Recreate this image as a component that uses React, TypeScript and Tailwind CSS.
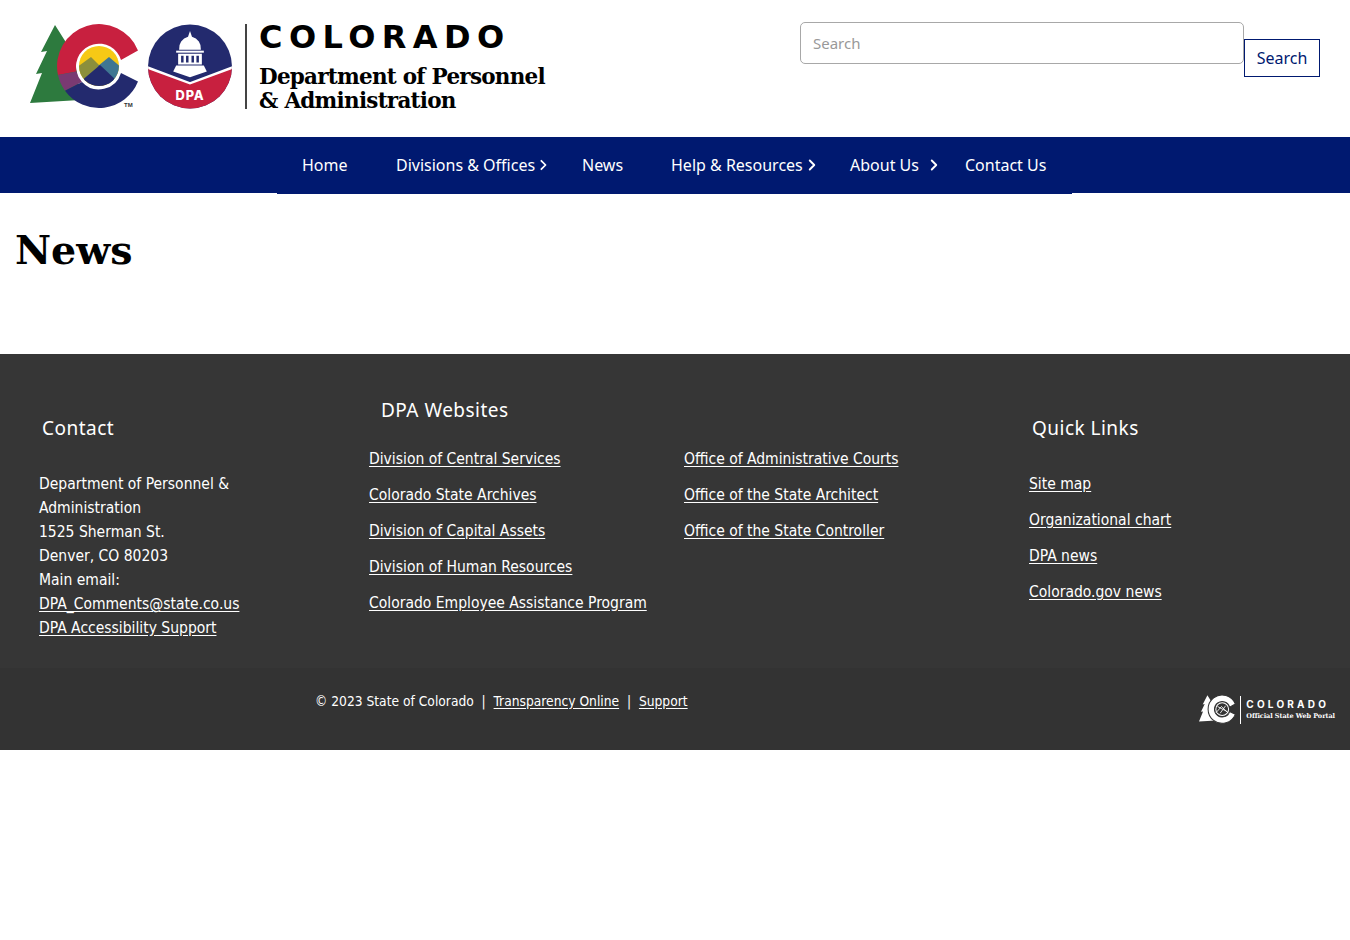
import React from "react";
import { ChevronRight } from "lucide-react";

const navItems = [
  { label: "Home", width: "w-[94px]" },
  { label: "Divisions & Offices", width: "w-[186px]", arrow: "mr-[30px]" },
  { label: "News", width: "w-[89px]" },
  { label: "Help & Resources", width: "w-[179px]", arrow: "mr-[29px]" },
  { label: "About Us", width: "w-[115px]", arrow: "mr-[22px]" },
  { label: "Contact Us", width: "w-[107px]" },
];

const websitesLeft = [
  "Division of Central Services",
  "Colorado State Archives",
  "Division of Capital Assets",
  "Division of Human Resources",
  "Colorado Employee Assistance Program",
];

const websitesRight = [
  "Office of Administrative Courts",
  "Office of the State Architect",
  "Office of the State Controller",
];

const quickLinks = ["Site map", "Organizational chart", "DPA news", "Colorado.gov news"];

const TREE = "M25 1 L37 20 L45 30 L50 76 L0 79 L12 49 L6 50 L17 27 L11 28 Z";

const ColoradoMark = () => (
  <svg viewBox="0 0 110 86" className="h-full w-full">
    <defs>
      <clipPath id="disc">
        <circle cx="69" cy="42" r="20" />
      </clipPath>
    </defs>
    <path d={TREE} fill="#2d7a3e" />
    <circle cx="69" cy="42" r="23" fill="#fff" />
    <path d="M108 26.400 A42 42 0 0 0 28 51 L46.500 47.500 A23 23 0 0 1 91 36 Z" fill="#c8203f" />
    <path d="M28 51 A42 42 0 0 0 35 66.700 L52 58 A23 23 0 0 1 46.500 47.500 Z" fill="#7a3a72" />
    <path d="M35 66.700 A42 42 0 0 0 108 57.600 L91 49 A23 23 0 0 1 52 58 Z" fill="#232a6e" />
    <g clipPath="url(#disc)">
      <rect x="45" y="18" width="48" height="48" fill="#f6c915" />
      <path d="M46 44 L61 33 L72 44 L62 60 L46 60 Z" fill="#8b8f3c" />
      <path d="M68 42 L79 33 L93 45 L90 60 L76 60 Z" fill="#3f7692" />
      <path d="M50 58 L70 41 L88 58 L88 66 L50 66 Z" fill="#232a6e" />
    </g>
  </svg>
);

const PortalMark = () => (
  <svg viewBox="0 0 110 86" className="h-full w-full">
    <path d={TREE} fill="#fff" />
    <path d="M108 26.400 A42 42 0 1 0 108 57.600 L91 49 A23 23 0 1 1 91 36 Z" fill="#fff" stroke="#333333" strokeWidth="3" />
    <circle cx="69" cy="42" r="19" fill="none" stroke="#fff" strokeWidth="3" />
    <path d="M51 52 L67 34 L87 54 M63 54 L79 32 M55 34 L85 50" fill="none" stroke="#fff" strokeWidth="2.500" />
  </svg>
);

const DpaSeal = () => (
  <svg viewBox="0 0 86 86" className="h-full w-full">
    <defs>
      <clipPath id="seal">
        <circle cx="43" cy="43" r="42.500" />
      </clipPath>
    </defs>
    <g clipPath="url(#seal)">
      <rect width="86" height="86" fill="#232a6e" />
      <path d="M0 44 L43 60 L86 44 V86 H0 Z" fill="#c8203f" />
      <path d="M0 44 L43 60 L86 44" fill="none" stroke="#fff" strokeWidth="2.500" />
    </g>
    <path d="M43 7 L45 13 A12 12 0 0 1 54 26 H32 A12 12 0 0 1 41 13 Z" fill="#fff" />
    <rect x="29" y="27" width="28" height="2" fill="#fff" />
    <path d="M31 30 H55 V41 H31 Z M34 32 V39 H36.500 V32 Z M39 32 V39 H41.500 V32 Z M44.500 32 V39 H47 V32 Z M49.500 32 V39 H52 V32 Z" fill="#fff" fillRule="evenodd" />
    <path d="M29 42 H57 L60 48 L43 54 L26 48 Z" fill="#fff" />
    <text x="43" y="77" textAnchor="middle" fill="#fff" fontSize="13" fontWeight="800" fontFamily="Inter, sans-serif" letterSpacing="0.8">
      DPA
    </text>
  </svg>
);

const Logo = () => (
  <div className="flex items-start">
    <div className="relative mt-[24px] h-[86px] w-[110px]">
      <ColoradoMark />
      <span className="absolute top-[77px] left-[94px] font-['Liberation_Sans',sans-serif] text-[6px] leading-[8px] font-bold text-[#333333]">TM</span>
    </div>
    <div className="mt-[24px] ml-[7px] h-[85px] w-[86px]">
      <DpaSeal />
    </div>
    <div className="mt-[24px] ml-[12px] h-[85px] w-[2px] bg-[#444444]" />
    <div className="mt-[18px] ml-[12px] text-black">
      <div className="font-['DejaVu_Sans',sans-serif] text-[32px] leading-[38px] font-bold tracking-[0.2em] whitespace-nowrap">COLORADO</div>
      <div className="mt-[9px] font-['DejaVu_Serif',serif] text-[21.500px] leading-[24px] font-bold tracking-[-0.035em] whitespace-nowrap">
        Department of Personnel
        <br />& Administration
      </div>
    </div>
  </div>
);

const SearchBox = () => (
  <form className="mr-[30px] flex items-start">
    <input
      placeholder="Search"
      className="mt-[22px] h-[42px] w-[444px] rounded-[5px] border border-[#a8a8a8] px-3 font-['Noto_Sans',sans-serif] text-[15px] placeholder:text-[#999999]"
    />
    <button type="button" className="mt-[39px] h-[38px] w-[76px] border border-[#001970] bg-white font-['Noto_Sans',sans-serif] text-[16px] text-[#001970]">
      Search
    </button>
  </form>
);

const Nav = () => (
  <nav className="h-[56px] bg-[#001970]">
    <ul className="ml-[277px] flex h-[57px] w-[795px] bg-[#001970] pl-[25px] font-['Noto_Sans',sans-serif] text-[16px] text-white">
      {navItems.map((item) => (
        <li key={item.label} className={`flex h-[56px] items-center justify-between whitespace-nowrap ${item.width}`}>
          <span>{item.label}</span>
          {item.arrow && <ChevronRight className={`h-[18px] w-[18px] ${item.arrow}`} strokeWidth={2.500} />}
        </li>
      ))}
    </ul>
  </nav>
);

const FooterLink = ({ children }: { children: React.ReactNode }) => (
  <a href="#" className="underline underline-offset-2">
    {children}
  </a>
);

const LinkList = ({ links }: { links: string[] }) => (
  <ul className="flex flex-col gap-[12px] leading-[24px]">
    {links.map((link) => (
      <li key={link} className="whitespace-nowrap">
        <FooterLink>{link}</FooterLink>
      </li>
    ))}
  </ul>
);

const ColumnHeading = ({ children, className }: { children: React.ReactNode; className: string }) => (
  <h2 className={`font-['Noto_Sans',sans-serif] text-[19px] leading-[26px] tracking-[0.025em] ${className}`}>{children}</h2>
);

const Footer = () => (
  <footer className="font-['DejaVu_Sans_Condensed','DejaVu_Sans',sans-serif] text-white">
    <div className="flex h-[314px] bg-[#363636] text-[15.500px]">
      <div className="w-[330px] pt-[61px] pl-[39px]">
        <ColumnHeading className="ml-[3px]">Contact</ColumnHeading>
        <div className="mt-[31px] leading-[24px]">
          <p>Department of Personnel &amp;</p>
          <p>Administration</p>
          <p>1525 Sherman St.</p>
          <p>Denver, CO 80203</p>
          <p>Main email:</p>
          <p>
            <FooterLink>DPA_Comments@state.co.us</FooterLink>
          </p>
          <p>
            <FooterLink>DPA Accessibility Support</FooterLink>
          </p>
        </div>
      </div>
      <div className="w-[660px] pt-[43px] pl-[39px]">
        <ColumnHeading className="ml-[12px]">DPA Websites</ColumnHeading>
        <div className="mt-[24px] flex">
          <div className="w-[315px]">
            <LinkList links={websitesLeft} />
          </div>
          <LinkList links={websitesRight} />
        </div>
      </div>
      <div className="pt-[61px] pl-[39px]">
        <ColumnHeading className="ml-[3px]">Quick Links</ColumnHeading>
        <div className="mt-[31px]">
          <LinkList links={quickLinks} />
        </div>
      </div>
    </div>
    <div className="flex h-[82px] justify-between bg-[#333333] pl-[315px] text-[13.700px]">
      <p className="mt-[23px] leading-[20px] whitespace-nowrap">
        © 2023 State of Colorado&nbsp; |&nbsp; <FooterLink>Transparency Online</FooterLink>&nbsp; |&nbsp; <FooterLink>Support</FooterLink>
      </p>
      <div className="mt-[27px] mr-[15px] flex h-[29px] items-center">
        <div className="h-[29px] w-[37px]">
          <PortalMark />
        </div>
        <div className="mx-[4px] h-[28px] w-px bg-white" />
        <div className="ml-[1px]">
          <div className="font-['Inter',sans-serif] text-[10px] leading-[12px] font-bold tracking-[0.32em]">COLORADO</div>
          <div className="mt-[2px] font-['DejaVu_Serif',serif] text-[6.500px] leading-[9px] font-bold tracking-[-0.01em] whitespace-nowrap">Official State Web Portal</div>
        </div>
      </div>
    </div>
  </footer>
);

export default function App() {
  return (
    <div className="min-h-[940px] bg-white">
      <header className="flex h-[137px] justify-between pl-[30px]">
        <Logo />
        <SearchBox />
      </header>
      <Nav />
      <main className="h-[161px] px-[15px] pt-[33px]">
        <h1 className="font-['DejaVu_Serif',serif] text-[39.500px] leading-[48px] font-bold text-black">News</h1>
      </main>
      <Footer />
    </div>
  );
}
